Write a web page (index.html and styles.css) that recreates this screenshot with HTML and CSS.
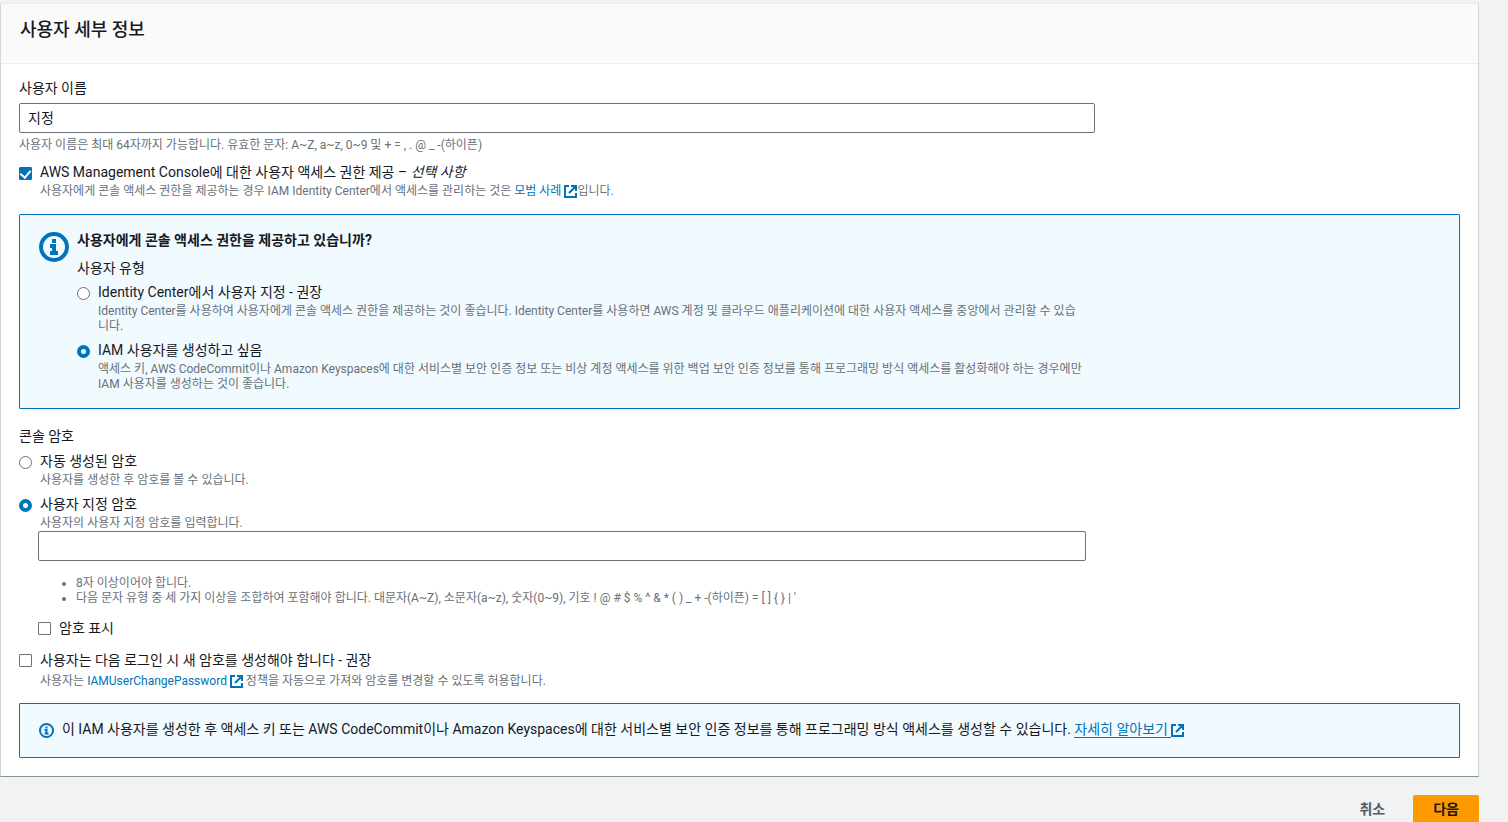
FILE: index.html
```html
<!DOCTYPE html>
<html lang="ko">
<head>
<meta charset="utf-8">
<title>사용자 세부 정보</title>
<link rel="stylesheet" href="styles.css">
</head>
<body>
<svg class="sprite" aria-hidden="true">
  <symbol id="external" viewBox="0 0 13 13">
    <path d="M5 1H1V12H12V8M7 1H12V6M12 1L5 8" fill="none" stroke="currentColor" stroke-width="2"/>
  </symbol>
  <symbol id="info" viewBox="0 0 30 30">
    <circle cx="15" cy="15" r="13" fill="none" stroke="currentColor" stroke-width="4"/>
    <path d="M13 7h4v4h-4zM11 12h6v7h2v4h-8v-4h2v-3h-2z" fill="currentColor"/>
  </symbol>
</svg>
<main class="page">
  <form>
    <section class="card">
      <header class="card-header"><h2 class="card-title">사용자 세부 정보</h2></header>
      <div class="card-body">
        <label class="field-label" for="user-name">사용자 이름</label>
        <input class="text-input name-input" id="user-name" type="text" value="지정">
        <p class="hint name-hint">사용자 이름은 최대 64자까지 가능합니다. 유효한 문자: A~Z, a~z, 0~9 및 + = , . @ _ -(하이픈)</p>

        <div class="choice console-choice">
          <input class="control check" type="checkbox" id="console" checked>
          <div>
            <label class="choice-label" for="console">AWS Management Console에 대한 사용자 액세스 권한 제공 – <em>선택 사항</em></label>
            <p class="hint">사용자에게 콘솔 액세스 권한을 제공하는 경우 IAM Identity Center에서 액세스를 관리하는 것은 <a class="link" href="#">모범 사례 <svg class="external"><use href="#external"/></svg></a>입니다.</p>
          </div>
        </div>

        <div class="alert type-alert">
          <svg class="info-large"><use href="#info"/></svg>
          <div class="alert-content">
            <h3 class="alert-title">사용자에게 콘솔 액세스 권한을 제공하고 있습니까?</h3>
            <fieldset class="group type-group">
              <legend class="field-label">사용자 유형</legend>
              <div class="choice-list">
                <div class="choice">
                  <input class="control radio" type="radio" name="type" id="type-center">
                  <div>
                    <label class="choice-label" for="type-center">Identity Center에서 사용자 지정 - 권장</label>
                    <p class="hint">Identity Center를 사용하여 사용자에게 콘솔 액세스 권한을 제공하는 것이 좋습니다. Identity Center를 사용하면 AWS 계정 및 클라우드 애플리케이션에 대한 사용자 액세스를 중앙에서 관리할 수 있습니다.</p>
                  </div>
                </div>
                <div class="choice">
                  <input class="control radio" type="radio" name="type" id="type-iam" checked>
                  <div>
                    <label class="choice-label" for="type-iam">IAM 사용자를 생성하고 싶음</label>
                    <p class="hint">액세스 키, AWS CodeCommit이나 Amazon Keyspaces에 대한 서비스별 보안 인증 정보 또는 비상 계정 액세스를 위한 백업 보안 인증 정보를 통해 프로그래밍 방식 액세스를 활성화해야 하는 경우에만 IAM 사용자를 생성하는 것이 좋습니다.</p>
                  </div>
                </div>
              </div>
            </fieldset>
          </div>
        </div>

        <fieldset class="group password-group">
          <legend class="field-label">콘솔 암호</legend>
          <div class="choice-list">
            <div class="choice">
              <input class="control radio" type="radio" name="password-mode" id="mode-auto">
              <div>
                <label class="choice-label" for="mode-auto">자동 생성된 암호</label>
                <p class="hint">사용자를 생성한 후 암호를 볼 수 있습니다.</p>
              </div>
            </div>
            <div class="choice">
              <input class="control radio" type="radio" name="password-mode" id="mode-custom" checked>
              <div>
                <label class="choice-label" for="mode-custom">사용자 지정 암호</label>
                <p class="hint">사용자의 사용자 지정 암호를 입력합니다.</p>
              </div>
            </div>
          </div>
        </fieldset>

        <div class="password-box">
          <input class="text-input password-input" type="password" aria-label="사용자 지정 암호">
          <ul class="rules">
            <li>8자 이상이어야 합니다.</li>
            <li>다음 문자 유형 중 세 가지 이상을 조합하여 포함해야 합니다. 대문자(A~Z), 소문자(a~z), 숫자(0~9), 기호 ! @ # $ % ^ &amp; * ( ) _ + -(하이픈) = [ ] { } | '</li>
          </ul>
          <div class="choice">
            <input class="control check" type="checkbox" id="show">
            <label class="choice-label" for="show">암호 표시</label>
          </div>
        </div>

        <div class="choice reset-choice">
          <input class="control check" type="checkbox" id="reset">
          <div>
            <label class="choice-label" for="reset">사용자는 다음 로그인 시 새 암호를 생성해야 합니다 - 권장</label>
            <p class="hint">사용자는 <a class="link" href="#">IAMUserChangePassword <svg class="external"><use href="#external"/></svg></a> 정책을 자동으로 가져와 암호를 변경할 수 있도록 허용합니다.</p>
          </div>
        </div>

        <div class="alert key-alert">
          <svg class="info-small"><use href="#info"/></svg>
          <p class="alert-text">이 IAM 사용자를 생성한 후 액세스 키 또는 AWS CodeCommit이나 Amazon Keyspaces에 대한 서비스별 보안 인증 정보를 통해 프로그래밍 방식 액세스를 생성할 수 있습니다. <a class="link" href="#"><span class="underlined">자세히 알아보기&nbsp;</span><svg class="external"><use href="#external"/></svg></a></p>
        </div>
      </div>
    </section>
    <div class="actions">
      <button class="button button-link" type="button">취소</button>
      <button class="button button-primary" type="submit">다음</button>
    </div>
  </form>
</main>
</body>
</html>
```
FILE: styles.css
```css
* { box-sizing: border-box; }

html { overflow: hidden; }

body {
  margin: 0;
  background: #f1f3f3;
  color: #16191f;
  font-family: Roboto, "Noto Sans CJK KR", sans-serif;
  font-size: 14px;
  line-height: 18px;
}

h2, h3, p, ul { margin: 0; }

.sprite { display: none; }

.page { padding: 3px 29px 0 0; }

.card {
  background: #fff;
  border: 1px solid #d0d5d8;
  border-top-color: #eaeded;
  border-bottom-color: #879596;
}

.card-header {
  padding: 15px 19px 22px;
  background: #fafafa;
  border-bottom: 1px solid #eaeded;
}

.card-title {
  font-size: 18px;
  line-height: 22px;
  font-weight: 500;
}

.card-body { padding: 15px 18px 18px; }

.field-label {
  display: block;
  padding: 0;
}

.text-input {
  display: block;
  height: 30px;
  padding: 0 8px 2px;
  border: 1px solid #687078;
  border-radius: 2px;
  background: #fff;
  color: inherit;
  font: inherit;
}

.name-input {
  width: calc(75% - 5px);
  margin-top: 6px;
}

.hint {
  margin-top: 3px;
  color: #687078;
  font-size: 12px;
  line-height: 15px;
}

.name-hint { margin-top: 5px; }

.choice {
  display: grid;
  grid-template-columns: 13px 1fr;
  column-gap: 8px;
}

.choice-label { display: block; }

.choice-list {
  display: grid;
  row-gap: 7px;
}

.console-choice { margin-top: 10px; }

.control {
  appearance: none;
  width: 13px;
  height: 13px;
  margin: 4px 0 0;
  border: 1px solid #687078;
  background: #fff;
}

.radio { border-radius: 50%; }

.radio:checked { border: 4px solid #0073bb; }

.check {
  margin-top: 3px;
  border-radius: 1px;
}

.console-choice .check { margin-top: 4px; }

.check:checked {
  display: grid;
  place-items: center;
  border-color: #0073bb;
  background: #0073bb;
}

.check:checked::after {
  content: "";
  width: 5px;
  height: 8px;
  border: solid #fff;
  border-width: 0 2px 2px 0;
  transform: translateY(-1px) rotate(40deg);
}

.link {
  color: #0073bb;
  text-decoration: none;
}

.external {
  width: 13px;
  height: 13px;
  vertical-align: -3px;
}

.underlined { border-bottom: 1px solid #0073bb; }

.alert {
  display: flex;
  gap: 8px;
  border: 1px solid #0073bb;
  border-radius: 1px;
  background: #f1faff;
}

.type-alert {
  margin-top: 15px;
  padding: 16px 19px;
}

.alert-content { flex: 1; }

.info-large {
  flex: none;
  width: 30px;
  height: 30px;
  margin-top: 1px;
  color: #0073bb;
}

.info-small {
  flex: none;
  width: 15px;
  height: 15px;
  margin-top: 3px;
  color: #0073bb;
}

.alert-title {
  font-size: 14px;
  line-height: 18px;
  font-weight: 700;
}

.group {
  min-width: 0;
  margin: 0;
  padding: 0;
  border: 0;
}

.type-group {
  width: calc(75% - 14px);
  margin-top: 10px;
}

.type-group .choice-list { margin-top: 6px; }

.password-group { margin-top: 18px; }

.password-group .choice-list { margin-top: 7px; }

.password-box { padding-left: 19px; }

.password-input { width: calc(75% - 19px); }

.rules {
  margin: 15px 0 13px;
  padding-left: 38px;
  color: #687078;
  font-size: 12px;
  line-height: 15px;
}

.reset-choice { margin-top: 14px; }

.reset-choice .hint { margin-top: 5px; }

.key-alert {
  margin-top: 14px;
  padding: 16px 19px 19px;
}

.actions {
  display: flex;
  justify-content: flex-end;
  gap: 8px;
  padding-top: 18px;
}

.button {
  height: 30px;
  padding: 0 19px 2px;
  border: 1px solid transparent;
  border-radius: 2px;
  font: inherit;
  font-weight: 700;
}

.button-link {
  background: transparent;
  color: #545b64;
}

.button-primary {
  border-color: #ff9900;
  background: #ff9900;
  color: #16191f;
}
```
